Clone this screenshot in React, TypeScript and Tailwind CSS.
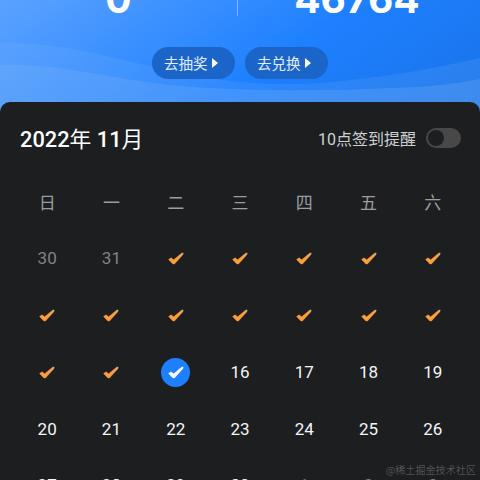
type Day = {
  label: string;
  state: "muted" | "signed" | "today" | "future";
};

const weekdays = ["日", "一", "二", "三", "四", "五", "六"];

const days: Day[] = [
  { label: "30", state: "muted" },
  { label: "31", state: "muted" },
  ...Array.from({ length: 14 }, (_, i): Day => ({ label: String(i + 1), state: "signed" })),
  { label: "15", state: "today" },
  ...Array.from({ length: 15 }, (_, i): Day => ({ label: String(i + 16), state: "future" })),
  { label: "1", state: "muted" },
  { label: "2", state: "muted" },
  { label: "3", state: "muted" },
];

function Check({ fill }: { fill: string }) {
  return (
    <svg viewBox="0 0 16 13" className="h-[13px] w-4" fill={fill} stroke={fill} strokeWidth=".3" strokeLinejoin="round">
      <path d="M.5 7.4 3.1 5.7 5.6 7.8 13.8 1 15.3.9 14.9 2.8 6.5 12.1 4.8 12Z" />
    </svg>
  );
}

function DayCell({ day }: { day: Day }) {
  if (day.state === "signed") {
    return <Check fill="url(#signed)" />;
  }
  if (day.state === "today") {
    return (
      <span className="flex size-[29px] items-center justify-center rounded-full bg-[#1e80ff]">
        <Check fill="#fff" />
      </span>
    );
  }
  return <span className={day.state === "muted" ? "text-[#828384]" : "text-[#f5f5f5]"}>{day.label}</span>;
}

function PillButton({ children }: { children: string }) {
  return (
    <button className="flex h-8 w-[83px] items-center gap-1 rounded-full bg-[#1c65c8] pl-3 text-[14.5px] text-[#e2eeff]">
      <span className="font-['Noto_Sans_CJK_SC'] leading-none">{children}</span>
      <svg viewBox="0 0 6 10" className="h-2.5 w-1.5" fill="#fff">
        <path d="M0 0 6 5 0 10Z" />
      </svg>
    </button>
  );
}

function Waves() {
  return (
    <svg viewBox="0 0 480 120" className="absolute inset-0 h-[120px] w-[480px]">
      <defs>
        <linearGradient id="signed" gradientUnits="userSpaceOnUse" x1="2" y1="12" x2="15" y2="1">
          <stop offset=".6" stopColor="#fd9e38" />
          <stop offset="1" stopColor="#e0ab78" />
        </linearGradient>
      </defs>
      <path
        d="M0 43C70 42 115 60 175 71C235 85 290 88 350 80C400 75 440 67 480 58V120H0Z"
        fill="#8abcf8"
        fillOpacity=".15"
      />
      <path
        d="M0 65C60 63 110 79 170 85C240 92 340 91 390 88C430 87 455 84 480 79V120H0Z"
        fill="#8abcf8"
        fillOpacity=".22"
      />
    </svg>
  );
}

export default function App() {
  return (
    <div className="relative h-[480px] w-[480px] overflow-hidden bg-[linear-gradient(145deg,#5ba2ff_0px,#1e80ff_210px,#176ee0_420px)] font-[Roboto,'Noto_Sans_CJK_SC',sans-serif]">
      <Waves />
      <header className="relative h-[102px]">
        <div className="flex h-[47px] items-start">
          <div className="-mt-[29px] w-[237px] text-center font-[Inter] text-[39px] leading-[56px] font-bold text-white">
            0
          </div>
          <div className="h-4 w-px bg-white/40" />
          <div className="-mt-[29px] w-[238px] text-center font-[Inter] text-[39px] leading-[56px] font-bold text-white">
            46764
          </div>
        </div>
        <div className="flex justify-center gap-2.5">
          <PillButton>去抽奖</PillButton>
          <PillButton>去兑换</PillButton>
        </div>
      </header>

      <main className="relative h-[400px] rounded-t-[10px] bg-[#1d1e20]">
        <div className="flex h-[72px] items-center justify-between pr-[19px] pl-5">
          <h1 className="pt-[5px] text-[21.8px] font-medium text-white">
            2022<span className="font-normal">年</span> 11<span className="font-normal">月</span>
          </h1>
          <div className="flex items-center gap-2.5 text-[16px] text-[#d0d0d1]">
            <span className="pt-[3px]">10点签到提醒</span>
            <span className="flex h-5 w-[35px] items-center rounded-full bg-[#484848] p-0.5">
              <span className="size-4 rounded-full bg-[#1d1e20]" />
            </span>
          </div>
        </div>
        <div className="grid grid-cols-7 px-[15px] text-center text-[17px] text-[#9c9d9e]">
          {weekdays.map((name) => (
            <div key={name} className="flex h-14 items-center justify-center pt-[3px]">
              {name}
            </div>
          ))}
        </div>
        <div className="grid grid-cols-7 px-[15px] text-[17px] leading-5">
          {days.map((day, i) => (
            <div key={i} className={`flex items-center justify-center ${i < 28 ? "h-[56.9px]" : "h-[54.6px]"}`}>
              <DayCell day={day} />
            </div>
          ))}
        </div>
      </main>

      <div className="absolute right-[4px] bottom-[3px] font-['Noto_Sans_CJK_SC'] text-[10.1px] font-light text-[#68696b]">
        @稀土掘金技术社区
      </div>
    </div>
  );
}
